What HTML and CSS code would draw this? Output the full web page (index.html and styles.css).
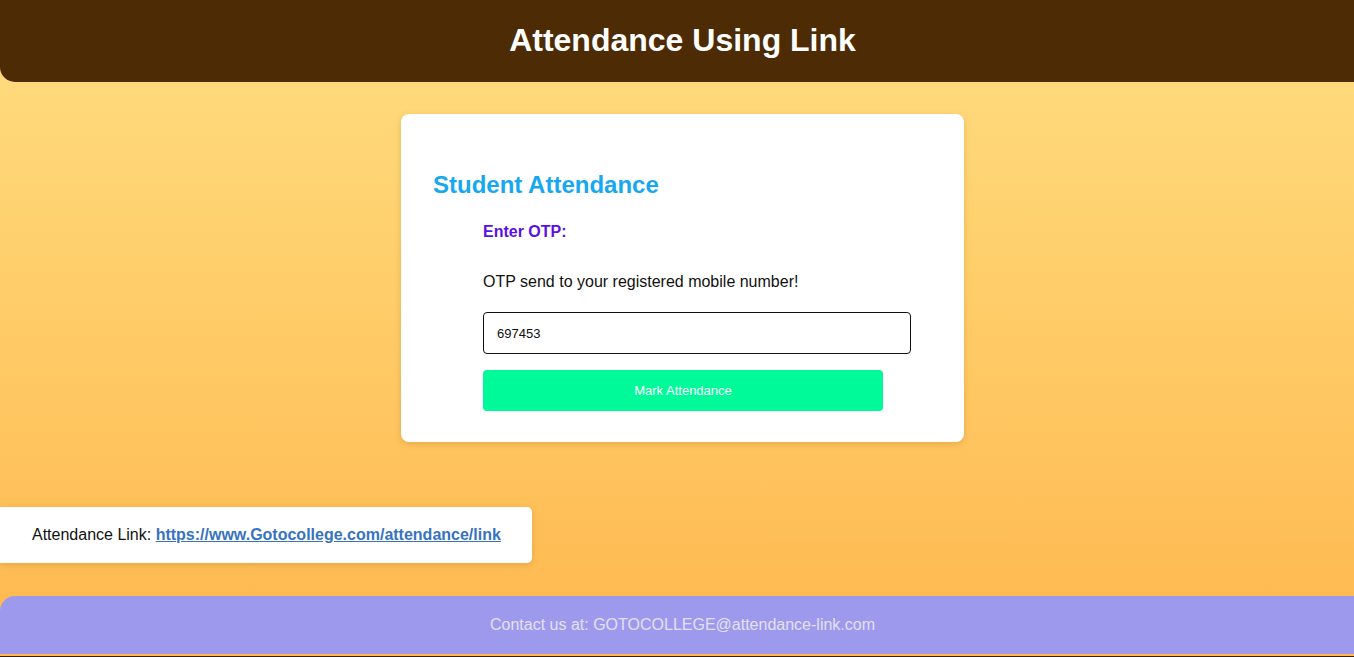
FILE: index.html
```html
<!DOCTYPE html>
<html lang="en">
<head>
<meta charset="utf-8">
<title>Attendance Using Link</title>
<link rel="stylesheet" href="styles.css">
</head>
<body>
<div class="page">
  <header class="site-header">
    <h1>Attendance Using Link</h1>
  </header>

  <main class="main">
    <section class="card">
      <h2 class="card-title">Student Attendance</h2>
      <form class="otp-form">
        <label class="otp-label" for="otp">Enter OTP:</label>
        <p class="otp-note">OTP send to your registered mobile number!</p>
        <input class="otp-input" id="otp" type="text" value="697453">
        <button class="otp-button" type="button">Mark Attendance</button>
      </form>
    </section>
  </main>

  <div class="link-box">
    Attendance Link: <a class="link" href="#">https://www.Gotocollege.com/attendance/link</a>
  </div>

  <footer class="site-footer">Contact us at: GOTOCOLLEGE@attendance-link.com</footer>
  <div class="after-footer"></div>
</div>
</body>
</html>
```

FILE: styles.css
```css
html, body {
  margin: 0;
  padding: 0;
}
body {
  font-family: "Liberation Sans", Arial, sans-serif;
  background: linear-gradient(180deg, #ffde82 0%, #ffcf6c 40%, #ffb74e 100%);
  overflow: hidden;
  height: 657px;
}
.page {
  width: calc(100% + 11px);
  display: flex;
  flex-direction: column;
}
.site-header {
  background: #4d2c05;
  height: 82px;
  border-radius: 0 0 0 15px;
  display: flex;
  align-items: center;
  justify-content: center;
}
.site-header h1 {
  margin: 0;
  color: #fff;
  font-size: 32px;
  font-weight: bold;
  padding-bottom: 2px;
}
.main {
  display: flex;
  justify-content: center;
  padding-top: 32px;
}
.card {
  width: 563px;
  box-sizing: border-box;
  background: #fff;
  border-radius: 8px;
  box-shadow: 0 2px 6px rgba(150, 100, 20, 0.25);
  padding: 32px 32px 31px 32px;
}
.card-title {
  margin: 25px 0 0 0;
  font-size: 24px;
  color: #17a8ef;
  font-weight: bold;
}
.otp-form {
  display: flex;
  flex-direction: column;
  align-items: flex-start;
  padding-left: 50px;
}
.otp-label {
  margin-top: 24px;
  font-size: 16px;
  font-weight: bold;
  color: #5a10e0;
}
.otp-note {
  margin: 32px 0 0 0;
  font-size: 16px;
  color: #111;
}
.otp-input {
  margin-top: 21px;
  width: 428px;
  height: 42px;
  box-sizing: border-box;
  border: 1px solid #111;
  border-radius: 4px;
  padding: 0 13px;
  font-family: "Liberation Sans", Arial, sans-serif;
  font-size: 13px;
  color: #111;
  background: #fff;
}
.otp-button {
  margin-top: 16px;
  width: 400px;
  height: 41px;
  border: none;
  border-radius: 4px;
  background: #00fa9a;
  color: #fff;
  font-family: "Liberation Sans", Arial, sans-serif;
  font-size: 13px;
}
.link-box {
  align-self: flex-start;
  margin-top: 65px;
  background: #fff;
  border-radius: 0 5px 5px 0;
  box-shadow: 0 2px 6px rgba(150, 100, 20, 0.25);
  padding: 19px 31px 19px 32px;
  font-size: 16px;
  color: #111;
  line-height: 18px;
}
.link {
  color: #3773c2;
  font-weight: bold;
}
.site-footer {
  margin-top: 33px;
  height: 58px;
  background: #9d9aed;
  border-radius: 15px 0 0 0;
  display: flex;
  align-items: center;
  justify-content: center;
  color: #e4e0f4;
  font-size: 16px;
}
.after-footer {
  margin-top: 2px;
  height: 20px;
  background: #3a2208;
}
```
